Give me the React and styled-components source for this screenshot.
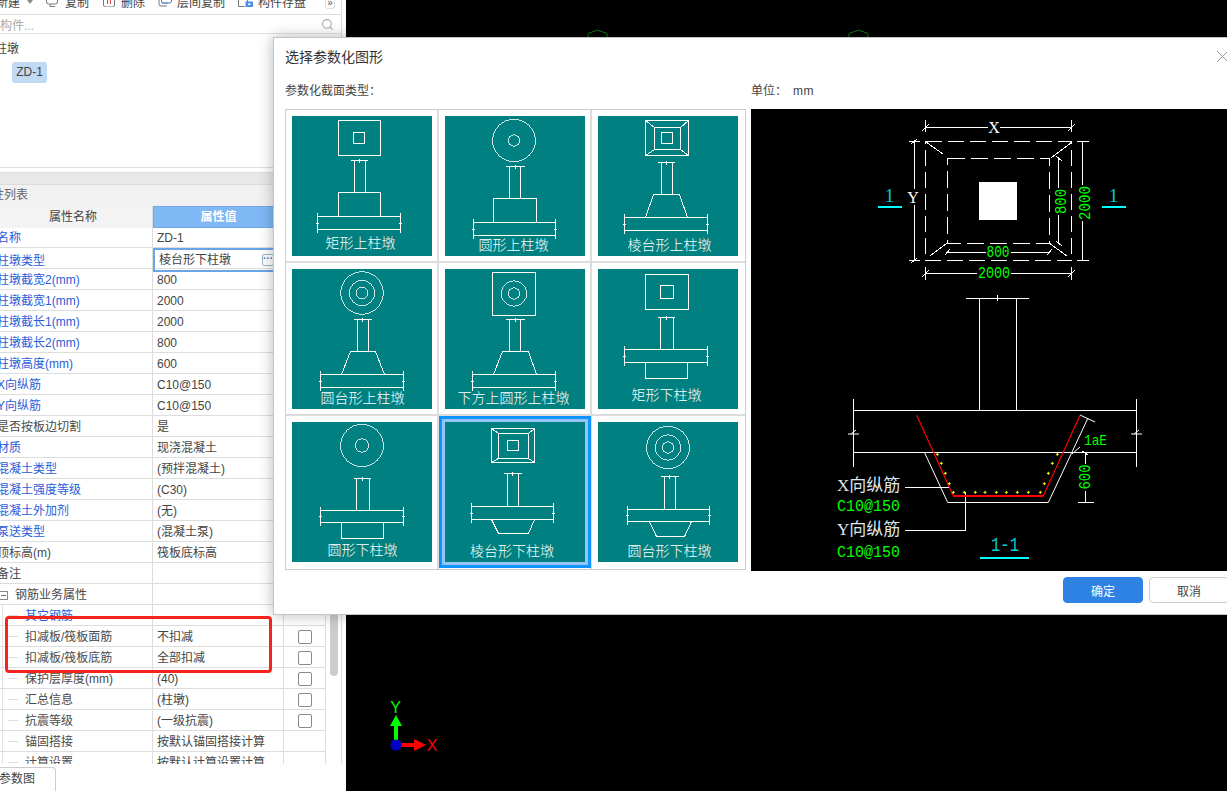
import React from "react";
import styled, { createGlobalStyle } from "styled-components";
import { Search } from "lucide-react";

const GlobalStyle = createGlobalStyle`
  html, body {
    margin: 0;
    height: 100%;
    overflow: hidden;
    background: #000;
  }
  body {
    font-family: "Liberation Sans", "Noto Sans CJK SC", sans-serif;
    font-size: 12px;
    color: #444;
  }
  * {
    box-sizing: border-box;
  }
`;

const Page = styled.div`
  position: relative;
  display: flex;
  width: 1227px;
  height: 791px;
  overflow: hidden;
`;

const Panel = styled.aside`
  flex: none;
  display: flex;
  flex-direction: column;
  width: 366px;
  height: 791px;
  margin-left: -20px;
  padding-right: 4px;
  background: #fff;
`;

const PanelBody = styled.div`
  position: relative;
  height: 765px;
  border-right: 1px solid #ddd;
  overflow: hidden;
`;

const Toolbar = styled.div`
  display: flex;
  height: 15px;
  padding: 0 6px 0 16px;
  gap: 13px;
  border-bottom: 1px solid #ddd;
  overflow: hidden;
`;

const ToolItem = styled.div`
  display: flex;
  flex: none;
  align-items: flex-start;
  gap: ${(p) => p.$gap || 5}px;
  height: 20px;
  margin-top: -7px;
  line-height: 20px;
  font-size: 12px;
  color: #444;
  svg {
    flex: none;
  }
`;

const Caret = styled.span`
  width: 0;
  height: 0;
  margin-top: 7px;
  border: 3px solid transparent;
  border-top: 4px solid #888;
  border-bottom: 0;
`;

const MoreButton = styled.div`
  flex: none;
  width: 10px;
  height: 9px;
  margin-left: auto;
  border: 1px solid #ddd;
  border-top: 0;
  border-radius: 0 0 3px 3px;
  color: #555;
  font-size: 10px;
  line-height: 6px;
  text-align: center;
`;

const SearchRow = styled.div`
  display: flex;
  align-items: center;
  justify-content: space-between;
  height: 19px;
  padding: 0 7px 0 20px;
  border-bottom: 1px solid #e2e2e2;
  color: #aaa;
`;

const Tree = styled.div`
  height: 134px;
  padding: 7px 0 0 15px;
  border-bottom: 1px solid #ddd;
  line-height: 16px;
`;

const TreeChip = styled.div`
  width: 35px;
  height: 21px;
  margin: 5px 0 0 17px;
  border-radius: 3px;
  background: #c0daf3;
  line-height: 21px;
  text-align: center;
`;

const Splitter = styled.div`
  height: 16px;
  padding-top: 4px;
  div {
    height: 12px;
    border-top: 1px solid #ddd;
    background: #e8e8e8;
  }
`;

const TitleBar = styled.div`
  height: 22px;
  border-top: 1px solid #ddd;
  background: #f1f1f1;
  color: #666;
  line-height: 21px;
`;

const PropTable = styled.div`
  display: flex;
  height: 559px;
  margin-left: 14px;
  border-bottom: 1px solid #ddd;
  overflow: hidden;
`;

const Rows = styled.div`
  flex: none;
  width: 331px;
`;

const Row = styled.div`
  display: grid;
  grid-template-columns: 159px 131px 41px;
  height: 21px;
  border-bottom: 1px solid #ddd;
  line-height: 20px;
`;

const HeaderName = styled.div`
  border-right: 1px solid #ddd;
  background: #f3f3f3;
  line-height: 22px;
  text-align: center;
`;

const HeaderValue = styled.div`
  background: #7fb8f5;
  border: 1px solid #6fa8ea;
  color: #fff;
  font-weight: bold;
  line-height: 20px;
  text-align: center;
`;

const HeaderBlank = styled.div`
  background: #f3f3f3;
`;

const NameCell = styled.div`
  position: relative;
  display: flex;
  align-items: center;
  padding: 1px 0 0 ${(p) => 3 + (p.$level || 0) * 28}px;
  border-right: 1px solid #ddd;
  color: ${(p) => (p.$blue ? "#2a5cd8" : "#4a4a4a")};
  white-space: nowrap;
  &::before {
    content: "";
    display: ${(p) => (p.$level ? "block" : "none")};
    position: absolute;
    left: 14px;
    top: 10px;
    width: 10px;
    border-top: 1px solid #ddd;
  }
  &::after {
    content: "";
    display: ${(p) => (p.$level ? "block" : "none")};
    position: absolute;
    left: 8px;
    top: -1px;
    height: 22px;
    border-left: 1px solid #e2e2e2;
  }
`;

const ValueCell = styled.div`
  display: flex;
  align-items: center;
  justify-content: space-between;
  padding: ${(p) => (p.$editing ? "0 8px 0 4px" : "1px 8px 0 4px")};
  border: ${(p) => (p.$editing ? "2px solid #6aa5e8" : "0")};
  border-right: ${(p) => (p.$editing ? "2px solid #6aa5e8" : "1px solid #ddd")};
  color: #444;
  white-space: nowrap;
`;

const EllipsisButton = styled.span`
  width: 12px;
  height: 12px;
  border: 1px solid #9bb;
  border-radius: 2px;
  color: #3e7fd0;
  font-size: 10px;
  font-weight: bold;
  line-height: 8px;
  text-align: center;
`;

const CheckCell = styled.div`
  display: flex;
  align-items: center;
  justify-content: center;
`;

const CheckBox = styled.span`
  width: 14px;
  height: 14px;
  border: 1px solid #8a8a8a;
  border-radius: 2px;
  background: #fff;
`;

const ExpandBox = styled.span`
  position: relative;
  flex: none;
  width: 9px;
  height: 9px;
  margin: 0 7px 0 2px;
  border: 1px solid #888;
  &::after {
    content: "";
    position: absolute;
    left: 1px;
    right: 1px;
    top: 3px;
    border-top: 1px solid #666;
  }
`;

const ScrollTrack = styled.div`
  flex: none;
  width: 16px;
  border-left: 1px solid #ddd;
  background: #fff;
`;

const ScrollThumb = styled.div`
  width: 8px;
  height: 456px;
  margin: 14px 0 0 4px;
  border-radius: 4px;
  background: #ccc;
`;

const TabBar = styled.div`
  flex: 1;
  padding-top: 3px;
`;

const Tab = styled.div`
  width: 76px;
  height: 24px;
  padding-left: 19px;
  border: 1px solid #ccc;
  border-left: 0;
  border-bottom: 0;
  border-radius: 0 4px 0 0;
  line-height: 23px;
`;

const RedFrame = styled.div`
  position: absolute;
  left: 5px;
  top: 616px;
  width: 267px;
  height: 57px;
  border: 3px solid #f8231a;
  border-radius: 4px;
`;

const Canvas = styled.main`
  flex: 1;
  background: #000;
`;

const HexMark = styled.svg`
  position: absolute;
  top: 28px;
  left: ${(p) => p.$left}px;
`;

const Gizmo = styled.svg`
  position: absolute;
  left: 380px;
  top: 700px;
`;

const Dialog = styled.section`
  position: absolute;
  left: 273px;
  top: 37px;
  display: flex;
  flex-direction: column;
  width: 970px;
  height: 578px;
  padding: 0 13px 0 11px;
  border: 1px solid #c4c4c4;
  background: #fff;
  box-shadow: 0 0 14px rgba(0, 0, 0, 0.28);
`;

const DialogHeader = styled.header`
  display: flex;
  align-items: center;
  justify-content: space-between;
  height: 36px;
  font-size: 14px;
  color: #333;
`;

const CloseIcon = styled.svg`
  display: block;
  margin-right: 1px;
`;

const LabelRow = styled.div`
  display: flex;
  height: 35px;
  line-height: 34px;
  color: #444;
`;

const LabelLeft = styled.div`
  width: 466px;
`;

const UnitValue = styled.span`
  margin-left: 6px;
  letter-spacing: 0.5px;
`;

const DialogBody = styled.div`
  display: flex;
  gap: 5px;
`;

const ShapeGrid = styled.div`
  flex: none;
  display: grid;
  grid-template-columns: repeat(3, 153px);
  grid-auto-rows: 153px;
  align-content: start;
  width: 461px;
  height: 461px;
  border: 1px solid #ccc;
`;

const ShapeCell = styled.div`
  padding: 6px 0 0 6px;
  border-right: ${(p) => (p.$lastCol ? 0 : "2px solid #dcdcdc")};
  border-bottom: ${(p) => (p.$lastRow ? 0 : "2px solid #dcdcdc")};
`;

const ShapeTile = styled.svg`
  display: block;
  width: 140px;
  height: 140px;
  background: #008080;
  box-shadow: ${(p) =>
    p.$selected ? "0 0 0 3px #93c5f5, 0 0 0 6px #0f94ff" : "none"};
`;

const TileLabel = styled.text`
  fill: #fff;
  font-size: 14px;
  text-anchor: middle;
  font-family: "Noto Sans CJK SC", sans-serif;
  font-weight: 300;
`;

const Preview = styled.svg`
  flex: 1;
  display: block;
  min-width: 0;
  height: 462px;
  background: #000;
`;

const CadText = styled.text`
  fill: ${(p) => p.$color || "#00ff00"};
  font-size: ${(p) => p.$size || 17}px;
  font-family: ${(p) =>
    p.$serif
      ? '"Liberation Serif", "Noto Sans CJK SC", serif'
      : '"Liberation Mono", monospace'};
  text-anchor: ${(p) => p.$anchor || "middle"};
  dominant-baseline: central;
`;

const ButtonRow = styled.footer`
  display: flex;
  justify-content: flex-end;
  gap: 6px;
  padding-top: 6px;
`;

const Button = styled.button`
  width: 80px;
  height: 26px;
  padding: 0;
  border: 1px solid ${(p) => (p.$primary ? "#2e82e4" : "#ccc")};
  border-radius: 4px;
  background: ${(p) => (p.$primary ? "#2e82e4" : "#fff")};
  color: ${(p) => (p.$primary ? "#fff" : "#444")};
  font: inherit;
`;

const ROWS = [
  ["名称", "ZD-1", true],
  ["柱墩类型", "棱台形下柱墩", true],
  ["柱墩截宽2(mm)", "800", true],
  ["柱墩截宽1(mm)", "2000", true],
  ["柱墩截长1(mm)", "2000", true],
  ["柱墩截长2(mm)", "800", true],
  ["柱墩高度(mm)", "600", true],
  ["X向纵筋", "C10@150", true],
  ["Y向纵筋", "C10@150", true],
  ["是否按板边切割", "是", false],
  ["材质", "现浇混凝土", true],
  ["混凝土类型", "(预拌混凝土)", true],
  ["混凝土强度等级", "(C30)", true],
  ["混凝土外加剂", "(无)", true],
  ["泵送类型", "(混凝土泵)", true],
  ["顶标高(m)", "筏板底标高", false],
  ["备注", "", false],
];

const STEEL_ROWS = [
  ["其它钢筋", "", true, false],
  ["扣减板/筏板面筋", "不扣减", false, true],
  ["扣减板/筏板底筋", "全部扣减", false, true],
  ["保护层厚度(mm)", "(40)", false, true],
  ["汇总信息", "(柱墩)", false, true],
  ["抗震等级", "(一级抗震)", false, true],
  ["锚固搭接", "按默认锚固搭接计算", false, false],
  ["计算设置", "按默认计算设置计算", false, false],
];

const Box = ({ a, b, c, d }) => <rect x={a} y={b} width={c - a} height={d - b} />;
const Ring = ({ x, y, r }) => <circle cx={x} cy={y} r={r} strokeWidth="0.8" />;
const Seg = ({ p }) => <polyline points={p} />;

// column stub with its dimension bar on top
const Stem = ({ x1, x2, barL, barR, top, bottom }) => (
  <>
    <Seg p={`${barL},${top} ${barR},${top}`} />
    <Seg p={`${x1},${top} ${x1},${bottom}`} />
    <Seg p={`${x2},${top} ${x2},${bottom}`} />
    <Seg p={`${(barL + barR) / 2},${top - 2} ${(barL + barR) / 2},${top + 2}`} />
  </>
);

// raft slab with break ticks on both ends
const Slab = ({ x1, x2, top, bottom }) => {
  const mid = (top + bottom) / 2;
  return (
    <>
      <Seg p={`${x1},${top} ${x2},${top}`} />
      <Seg p={`${x1},${bottom} ${x2},${bottom}`} />
      <Seg p={`${x1},${top - 3.5} ${x1},${bottom + 3.5}`} />
      <Seg p={`${x2},${top - 3.5} ${x2},${bottom + 3.5}`} />
      <Seg p={`${x1 - 1.5},${mid} ${x1 + 1.5},${mid}`} />
      <Seg p={`${x2 - 1.5},${mid} ${x2 + 1.5},${mid}`} />
    </>
  );
};

const Frustum = ({ plan }) => (
  <>
    <Box a={plan[0]} b={plan[1]} c={plan[2]} d={plan[3]} />
    <Box a={plan[4]} b={plan[5]} c={plan[6]} d={plan[7]} />
    <Box a={plan[8]} b={plan[9]} c={plan[10]} d={plan[11]} />
    <Seg p={`${plan[0]},${plan[1]} ${plan[4]},${plan[5]}`} />
    <Seg p={`${plan[2]},${plan[1]} ${plan[6]},${plan[5]}`} />
    <Seg p={`${plan[0]},${plan[3]} ${plan[4]},${plan[7]}`} />
    <Seg p={`${plan[2]},${plan[3]} ${plan[6]},${plan[7]}`} />
  </>
);

const TILES = [
  {
    label: "矩形上柱墩",
    tx: 68.5,
    ty: 132,
    art: (
      <>
        <Box a={46.5} b={4.5} c={88.5} d={39.5} />
        <Box a={61.5} b={16.5} c={72.5} d={27.5} />
        <Stem x1={62.5} x2={73.5} barL={58.5} barR={75.5} top={44.5} bottom={76.5} />
        <Box a={46.5} b={76.5} c={88.5} d={100.5} />
        <Slab x1={25.5} x2={108.5} top={100.5} bottom={113.5} />
      </>
    ),
  },
  {
    label: "圆形上柱墩",
    tx: 68.5,
    ty: 134,
    art: (
      <>
        <Ring x={69} y={24.5} r={21.3} />
        <Ring x={69} y={24.5} r={5.7} />
        <Stem x1={64.5} x2={75.5} barL={60.5} barR={79.5} top={50.5} bottom={82.5} />
        <Box a={48.5} b={82.5} c={91.5} d={106.5} />
        <Slab x1={28.5} x2={110.5} top={106.5} bottom={119.5} />
      </>
    ),
  },
  {
    label: "棱台形上柱墩",
    tx: 71.5,
    ty: 134,
    art: (
      <>
        <Frustum plan={[47.5, 4.5, 90.5, 39.5, 56.5, 11.5, 82.5, 33.5, 63.5, 16.5, 74.5, 27.5]} />
        <Stem x1={63.5} x2={74.5} barL={59.5} barR={76.5} top={46.5} bottom={78.5} />
        <Seg p="47.5,101.5 55.5,78.5 81.5,78.5 89.5,101.5" />
        <Slab x1={26.5} x2={109.5} top={101.5} bottom={114.5} />
      </>
    ),
  },
  {
    label: "圆台形上柱墩",
    tx: 70.5,
    ty: 134,
    art: (
      <>
        <Ring x={70} y={24} r={21.3} />
        <Ring x={70} y={24} r={12.7} />
        <Ring x={70} y={24} r={5.7} />
        <Stem x1={65.5} x2={76.5} barL={61.5} barR={79.5} top={50.5} bottom={82.5} />
        <Seg p="49.5,105.5 58.5,82.5 83.5,82.5 92.5,105.5" />
        <Slab x1={28.5} x2={111.5} top={105.5} bottom={118.5} />
      </>
    ),
  },
  {
    label: "下方上圆形上柱墩",
    tx: 68.5,
    ty: 134,
    art: (
      <>
        <Box a={47.5} b={3.5} c={90.5} d={46.5} />
        <Ring x={69} y={24.5} r={12.7} />
        <Ring x={69} y={24.5} r={5.7} />
        <Stem x1={64.5} x2={75.5} barL={60.5} barR={79.5} top={50.5} bottom={82.5} />
        <Seg p="48.5,105.5 57.5,82.5 83.5,82.5 91.5,105.5" />
        <Slab x1={27.5} x2={110.5} top={105.5} bottom={118.5} />
      </>
    ),
  },
  {
    label: "矩形下柱墩",
    tx: 68.5,
    ty: 131,
    art: (
      <>
        <Box a={47.5} b={5.5} c={90.5} d={40.5} />
        <Box a={62.5} b={16.5} c={75.5} d={29.5} />
        <Stem x1={62.5} x2={75.5} barL={59.5} barR={76.5} top={48.5} bottom={80.5} />
        <Slab x1={26.5} x2={109.5} top={80.5} bottom={93.5} />
        <Box a={47.5} b={93.5} c={89.5} d={109.5} />
      </>
    ),
  },
  {
    label: "圆形下柱墩",
    tx: 70.5,
    ty: 133,
    art: (
      <>
        <Ring x={70} y={23.5} r={21.3} />
        <Ring x={70} y={23.5} r={6.7} />
        <Stem x1={64.5} x2={77.5} barL={61.5} barR={78.5} top={56.5} bottom={88.5} />
        <Slab x1={28.5} x2={111.5} top={88.5} bottom={100.5} />
        <Box a={49.5} b={100.5} c={91.5} d={116.5} />
      </>
    ),
  },
  {
    label: "棱台形下柱墩",
    tx: 67,
    ty: 133.5,
    selected: true,
    art: (
      <>
        <Frustum plan={[46.5, 6.5, 89.5, 40.5, 53.5, 11.5, 83.5, 36.5, 62.5, 18.5, 73.5, 28.5]} />
        <Stem x1={62.5} x2={73.5} barL={58.5} barR={76.5} top={51.5} bottom={84.5} />
        <Slab x1={26.5} x2={108.5} top={84.5} bottom={97.5} />
        <Seg p="46.5,97.5 53.5,111.5 83.5,111.5 89.5,97.5" />
      </>
    ),
  },
  {
    label: "圆台形下柱墩",
    tx: 71.5,
    ty: 134,
    art: (
      <>
        <Ring x={70} y={25.5} r={21.3} />
        <Ring x={70} y={25.5} r={12.7} />
        <Ring x={70} y={25.5} r={5.7} />
        <Stem x1={66.5} x2={77.5} barL={62.5} barR={80.5} top={54.5} bottom={87.5} />
        <Slab x1={29.5} x2={111.5} top={87.5} bottom={99.5} />
        <Seg p="51.5,99.5 58.5,114.5 86.5,114.5 93.5,99.5" />
      </>
    ),
  },
];

const REBAR_DOTS = [
  [400, 307], [433, 307], [466, 307], [495, 307], [529, 307], [559, 307], [592, 307], [625, 307], [661, 307],
  [388, 281], [376, 250], [364, 220], [352, 193],
  [673, 281], [685, 250], [697, 220], [712, 193],
].map(([x, y]) => [69 + x / 3, 281 + y / 3]);

// toolbar icons: only their lower half shows, y=0 is the page's top edge
function CopyIcon() {
  return (
    <svg width="14" height="14" viewBox="0 -7 14 14" fill="none" stroke="#777">
      <rect x="0.5" y="-6" width="11" height="10" rx="2" />
      <path d="M4 4v2.5h5" />
    </svg>
  );
}

function DeleteIcon() {
  return (
    <svg width="14" height="14" viewBox="0 -7 14 14" fill="none" stroke="#777">
      <path d="M1.5 -2v7a2 2 0 0 0 2 2h7a2 2 0 0 0 2-2v-7" />
      <path d="M5.5 0v4M8.5 0v4" stroke="#e24a3a" />
    </svg>
  );
}

function FloorCopyIcon() {
  return (
    <svg width="14" height="14" viewBox="0 -7 14 14" fill="none" stroke="#777">
      <rect x="3.5" y="-5" width="10" height="8" rx="2" />
      <path d="M1 0v4a2 2 0 0 0 2 2h6" />
      <path d="M3.5 3h7" stroke="#3e8be0" />
    </svg>
  );
}

function SaveIcon() {
  return (
    <svg width="15" height="14" viewBox="0 -7 15 14" fill="none" stroke="#777">
      <path d="M0.5 -2v8.5h6M9.5 -2v5" />
      <rect x="8" y="2" width="6.5" height="5" fill="#4a90e2" stroke="#4a90e2" />
      <rect x="10" y="3.5" width="2.5" height="1.5" fill="#fff" stroke="none" />
    </svg>
  );
}

function PropertyPanel() {
  return (
    <Panel>
      <PanelBody>
        <Toolbar>
          <ToolItem $gap={7}>
            新建
            <Caret />
          </ToolItem>
          <ToolItem>
            <CopyIcon />
            复制
          </ToolItem>
          <ToolItem>
            <DeleteIcon />
            删除
          </ToolItem>
          <ToolItem>
            <FloorCopyIcon />
            层间复制
          </ToolItem>
          <ToolItem>
            <SaveIcon />
            构件存盘
          </ToolItem>
          <MoreButton>»</MoreButton>
        </Toolbar>
        <SearchRow>
          构件...
          <Search size={13} color="#aaa" />
        </SearchRow>
        <Tree>
          柱墩
          <TreeChip>ZD-1</TreeChip>
        </Tree>
        <Splitter>
          <div />
        </Splitter>
        <TitleBar>属性列表</TitleBar>
        <PropTable>
          <Rows>
            <Row>
              <HeaderName>属性名称</HeaderName>
              <HeaderValue>属性值</HeaderValue>
              <HeaderBlank />
            </Row>
            {ROWS.map(([name, value, blue], i) => (
              <Row key={name}>
                <NameCell $blue={blue}>{name}</NameCell>
                <ValueCell $editing={i === 1}>
                  {value}
                  {i === 1 && <EllipsisButton>···</EllipsisButton>}
                </ValueCell>
                <CheckCell />
              </Row>
            ))}
            <Row>
              <NameCell>
                <ExpandBox />
                钢筋业务属性
              </NameCell>
              <ValueCell />
              <CheckCell />
            </Row>
            {STEEL_ROWS.map(([name, value, blue, check]) => (
              <Row key={name}>
                <NameCell $level={1} $blue={blue}>
                  {name}
                </NameCell>
                <ValueCell>{value}</ValueCell>
                <CheckCell>{check && <CheckBox />}</CheckCell>
              </Row>
            ))}
          </Rows>
          <ScrollTrack>
            <ScrollThumb />
          </ScrollTrack>
        </PropTable>
      </PanelBody>
      <TabBar>
        <Tab>参数图</Tab>
      </TabBar>
      <RedFrame />
    </Panel>
  );
}

function PlanDrawing() {
  return (
    <>
      <g fill="none" stroke="#fff" shapeRendering="crispEdges">
        <rect x="174.5" y="32.5" width="146" height="119" strokeDasharray="16 6" />
        <rect x="196.5" y="49.5" width="102" height="85" strokeDasharray="17 6" />
        <path d="M175 33 192 45M321 33 300 49M196 134 179 147M298 134 316 147" />
        <path d="M175 18.5H321M174.5 11V23M320.5 11V23M171 22 178 15M317 22 324 15" />
        <path d="M163.5 33V151M158 32.5H169M158 151.5H169M160 35 166 30M160 154 166 149" />
        <path d="M331.5 33V151M326 32.5H338M326 151.5H338" />
        <path d="M307.5 50V134M305 47 311 52M305 132 311 137" />
        <path d="M197 143.5H298M194 146 199 140M296 146 301 140" />
        <path d="M175 164.5H321M174.5 158V171M320.5 158V171M171 168 178 161M317 168 324 161" />
      </g>
      <rect x="228" y="73" width="38" height="38" fill="#fff" />
      <rect x="235" y="137" width="25" height="14" fill="#000" />
      <rect x="226" y="158" width="34" height="14" fill="#000" />
      <rect x="327" y="76" width="14" height="36" fill="#000" />
      <rect x="303" y="79" width="14" height="27" fill="#000" />
      <rect x="237" y="11" width="12" height="14" fill="#000" />
      <CadText x="243" y="18" $color="#fff" $size={16} $serif>X</CadText>
      <rect x="156" y="80" width="14" height="16" fill="#000" />
      <CadText x="162" y="88" $color="#fff" $size={16} $serif>Y</CadText>
      <CadText x="247" y="143.5" textLength="23" lengthAdjust="spacingAndGlyphs">800</CadText>
      <CadText x="243" y="164.5" textLength="32" lengthAdjust="spacingAndGlyphs">2000</CadText>
      <CadText x="334" y="94" textLength="34" lengthAdjust="spacingAndGlyphs" transform="rotate(-90 334 94)">2000</CadText>
      <CadText x="310" y="92.5" textLength="25" lengthAdjust="spacingAndGlyphs" transform="rotate(-90 310 92.5)">800</CadText>
      <CadText x="138.5" y="86" $color="#00d0d0" $size={19} $serif>1</CadText>
      <CadText x="362.5" y="86" $color="#00d0d0" $size={19} $serif>1</CadText>
      <rect x="127" y="97" width="24" height="2" fill="#00ffff" />
      <rect x="351" y="97" width="24" height="2" fill="#00ffff" />
    </>
  );
}

function SectionDrawing() {
  return (
    <>
      <g fill="none" stroke="#fff" shapeRendering="crispEdges">
        <path d="M215 189.5H278M246.5 186V192" />
      </g>
      <g fill="none" stroke="#fff">
        <path d="M228.5 189V301M265.5 189V301" shapeRendering="crispEdges" />
        <path d="M102 301.5H385M102 343.5H385M102.5 290V358M385.5 290V358" shapeRendering="crispEdges" />
        <path d="M97 325H108M100 325 105 321M380 325H391M383 325 388 321" />
        <path d="M173.5 343.5 196.7 393.5H297.3L337 309" />
        <path d="M329 306 344 313M321 345 329 338" />
        <path d="M334.5 343V393M327 393.5H343M331 342 337 346" shapeRendering="crispEdges" />
        <path d="M154 378.5H198M154 421.5H214.5V383" shapeRendering="crispEdges" />
      </g>
      <polyline points="165.7,306.3 202.3,387 292.3,387 329,306.3" fill="none" stroke="#f00" strokeWidth="1.2" />
      <rect x="202" y="386" width="90" height="2" fill="#f00" />
      {REBAR_DOTS.map(([x, y]) => (
        <path key={`${x}-${y}`} d={`M${x - 1.5} ${y}h3M${x} ${y - 1.5}v3`} stroke="#ffff00" fill="none" />
      ))}
      <rect x="327" y="355" width="15" height="27" fill="#000" />
      <CadText x="334" y="368" textLength="25" lengthAdjust="spacingAndGlyphs" transform="rotate(-90 334 368)">600</CadText>
      <CadText x="333" y="332" $anchor="start" $size={15} textLength="23" lengthAdjust="spacingAndGlyphs">1aE</CadText>
      <CadText x="86" y="376" $anchor="start" $color="#dfe6ee" $size={17} $serif>X向纵筋</CadText>
      <CadText x="86" y="397" $anchor="start" textLength="63" lengthAdjust="spacingAndGlyphs">C10@150</CadText>
      <CadText x="86" y="420" $anchor="start" $color="#dfe6ee" $size={17} $serif>Y向纵筋</CadText>
      <CadText x="86" y="443" $anchor="start" textLength="63" lengthAdjust="spacingAndGlyphs">C10@150</CadText>
      <CadText x="254" y="436" $color="#00d0d0" $size={20} textLength="28" lengthAdjust="spacingAndGlyphs">1-1</CadText>
      <rect x="229" y="448" width="49" height="2" fill="#00ffff" />
    </>
  );
}

function ShapeDialog() {
  return (
    <Dialog>
      <DialogHeader>
        选择参数化图形
        <CloseIcon width="11" height="11" viewBox="0 0 11 11" stroke="#999" fill="none">
          <path d="M0 0 11 11M11 0 0 11" />
        </CloseIcon>
      </DialogHeader>
      <LabelRow>
        <LabelLeft>参数化截面类型：</LabelLeft>
        单位：
        <UnitValue>mm</UnitValue>
      </LabelRow>
      <DialogBody>
        <ShapeGrid>
          {TILES.map((tile, i) => (
            <ShapeCell key={tile.label} $lastCol={i % 3 === 2} $lastRow={i > 5}>
              <ShapeTile viewBox="0 0 140 140" $selected={tile.selected}>
                <g fill="none" stroke="#fff" shapeRendering="crispEdges">
                  {tile.art}
                </g>
                <TileLabel x={tile.tx} y={tile.ty}>
                  {tile.label}
                </TileLabel>
              </ShapeTile>
            </ShapeCell>
          ))}
        </ShapeGrid>
        <Preview viewBox="0 0 478 462">
          <PlanDrawing />
          <SectionDrawing />
        </Preview>
      </DialogBody>
      <ButtonRow>
        <Button $primary>确定</Button>
        <Button>取消</Button>
      </ButtonRow>
    </Dialog>
  );
}

export default function App() {
  return (
    <Page>
      <GlobalStyle />
      <PropertyPanel />
      <Canvas />
      <HexMark $left={587} width="22" height="10" viewBox="0 0 22 10" fill="none" stroke="#0a7a1a">
        <path d="M1 10V5.5L10.5 2 20 5.5V10" />
      </HexMark>
      <HexMark $left={848} width="22" height="10" viewBox="0 0 22 10" fill="none" stroke="#0a7a1a">
        <path d="M1 10V5.5L10.5 2 20 5.5V10" />
      </HexMark>
      <Gizmo width="60" height="55" viewBox="0 0 60 55">
        <text x="15.7" y="12.5" fill="#00ff00" fontSize="16" textAnchor="middle" fontFamily="Liberation Sans">Y</text>
        <text x="52" y="51" fill="#ff0000" fontSize="16" textAnchor="middle" fontFamily="Liberation Sans">X</text>
        <rect x="14" y="25" width="4" height="20" fill="#00ff00" />
        <polygon points="16,15 22,26 10,26" fill="#00ff00" />
        <rect x="16" y="43" width="20" height="4" fill="#ff0000" />
        <polygon points="46,45 34,39 34,51" fill="#ff0000" />
        <circle cx="16" cy="45" r="5.5" fill="#0000c8" />
      </Gizmo>
      <ShapeDialog />
    </Page>
  );
}
